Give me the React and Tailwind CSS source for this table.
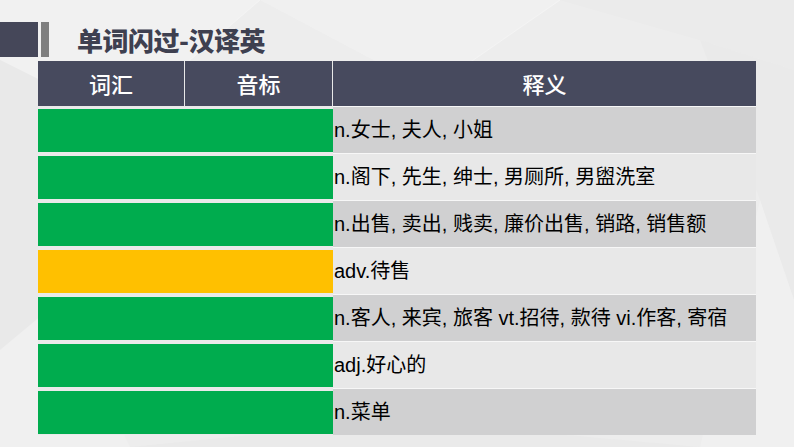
import React from "react";

const rows = [
  { c: "bg-[#00ac4e]", bg: "bg-[#d0d0d1]", t: "n.女士, 夫人, 小姐" },
  { c: "bg-[#00ac4e]", bg: "bg-[#e8e8e8]", t: "n.阁下, 先生, 绅士, 男厕所, 男盥洗室" },
  { c: "bg-[#00ac4e]", bg: "bg-[#d0d0d1]", t: "n.出售, 卖出, 贱卖, 廉价出售, 销路, 销售额" },
  { c: "bg-[#ffc000]", bg: "bg-[#e8e8e8]", t: "adv.待售" },
  { c: "bg-[#00ac4e]", bg: "bg-[#d0d0d1]", t: "n.客人, 来宾, 旅客 vt.招待, 款待 vi.作客, 寄宿" },
  { c: "bg-[#00ac4e]", bg: "bg-[#e8e8e8]", t: "adj.好心的" },
  { c: "bg-[#00ac4e]", bg: "bg-[#d0d0d1]", t: "n.菜单" },
];

function Background() {
  return (
    <svg className="absolute inset-0" width="794" height="447" viewBox="0 0 794 447">
      <rect width="794" height="447" fill="#ededed" />
      <polygon points="0,0 260,0 120,120 0,60" fill="#f1f1f1" />
      <polygon points="260,0 560,0 430,90" fill="#f0f0f0" />
      <polygon points="560,0 794,0 794,70 700,40" fill="#ebebeb" />
      <polygon points="0,60 120,120 60,300 0,350" fill="#e9e9e9" />
      <polygon points="0,350 60,300 130,447 0,447" fill="#f0f0f0" />
      <polygon points="700,40 794,70 794,300 760,200" fill="#eaeaea" />
      <polygon points="760,200 794,300 794,447 700,447" fill="#f0f0f0" />
      <polygon points="130,447 400,420 700,447" fill="#eaeaea" />
      <line x1="430" y1="90" x2="560" y2="0" stroke="#f4f4f4" strokeWidth="1" />
      <line x1="120" y1="120" x2="260" y2="0" stroke="#f4f4f4" strokeWidth="1" />
    </svg>
  );
}

export default function App() {
  return (
    <div className="relative w-[794px] h-[447px] overflow-hidden bg-[#ededed]">
      <Background />
      <div className="relative flex flex-col">
        <div className="flex items-center h-[35px] mt-[22px]">
          <div className="w-[38px] h-[35px] bg-[#454759]" />
          <div className="w-[8px] h-[35px] bg-[#7f7f7f] ml-[3px]" />
          <div
            className="ml-[28px] text-[26px] font-black text-[#3e4050] leading-none tracking-[-0.5px]"
            style={{ fontFamily: '"Noto Sans CJK SC", sans-serif' }}
          >
            单词闪过-汉译英
          </div>
        </div>
        <div
          className="ml-[38px] mt-[4px] w-[718px] flex flex-col"
          style={{ fontFamily: '"Liberation Sans", "Noto Sans CJK SC", sans-serif' }}
        >
          <div
            className="flex h-[45px] bg-[#474a5e] text-white text-[22px] font-medium"
            style={{ fontFamily: '"Noto Sans CJK SC", sans-serif' }}
          >
            <div className="w-[147px] flex items-center justify-center border-r border-[#e8e8e8]">词汇</div>
            <div className="w-[148px] flex items-center justify-center border-r border-[#e8e8e8]">音标</div>
            <div className="flex-1 flex items-center justify-center">释义</div>
          </div>
          {rows.map((r, i) => (
            <div key={i} className="flex h-[47px]">
              <div className="w-[295px] flex flex-col pt-[3px] pb-[1px] bg-[#eaeaea]">
                <div className={`flex-1 ${r.c}`} />
              </div>
              <div className={`flex-1 flex items-center border-t border-[#f7f7f7] ${r.bg} text-[20px] text-black pl-[1px]`}>
                {r.t}
              </div>
            </div>
          ))}
        </div>
      </div>
    </div>
  );
}
